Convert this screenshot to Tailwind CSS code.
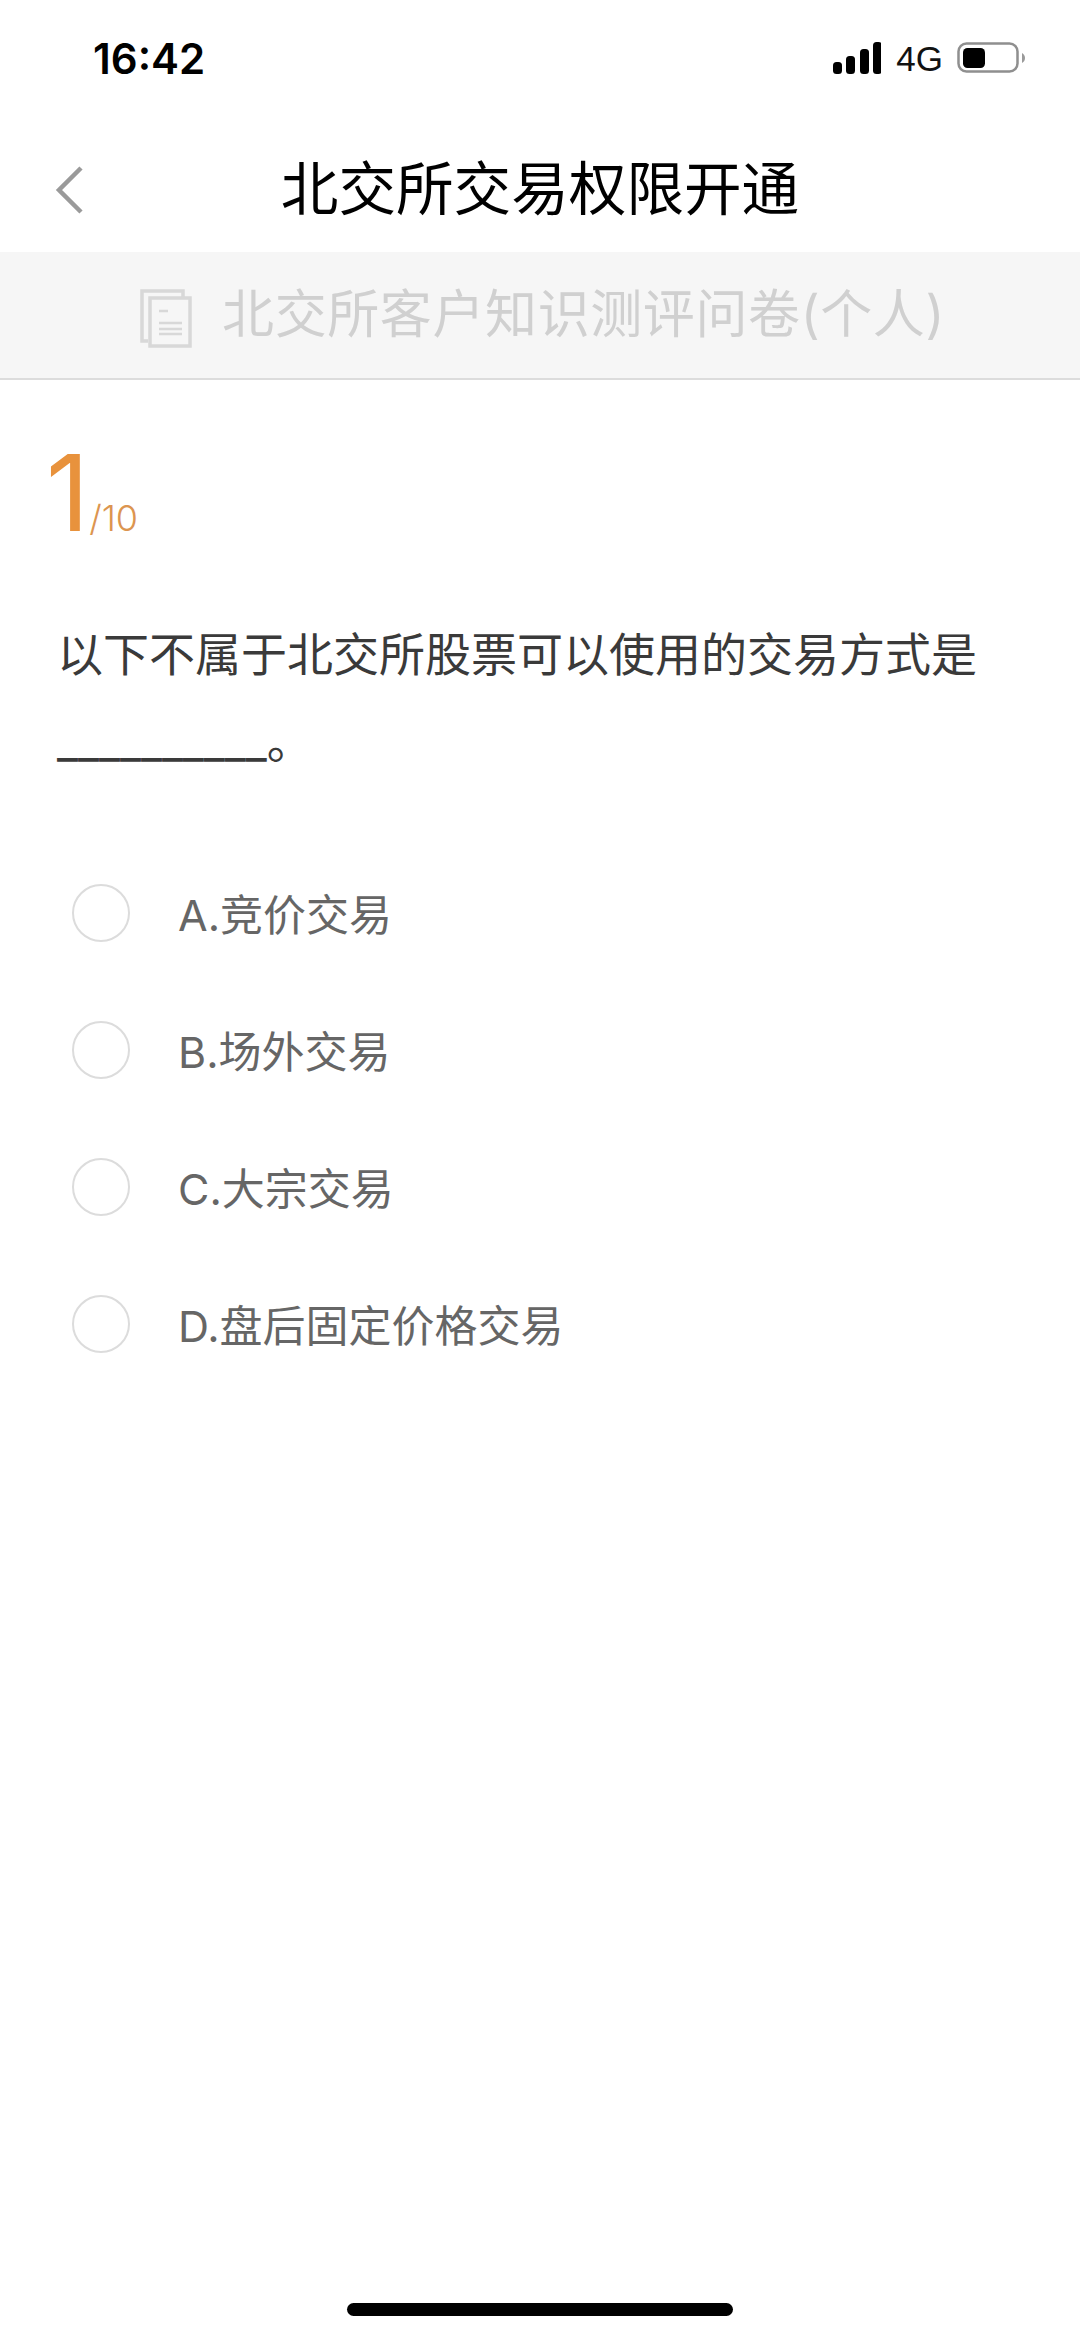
<!DOCTYPE html>
<html lang="zh">
<head>
<meta charset="utf-8">
<script src="https://cdn.jsdelivr.net/npm/@tailwindcss/browser@4"></script>
</head>
<body class="bg-white">
<div class="w-[1080px] h-[2337px] flex flex-col bg-white font-['Inter','Noto_Sans_CJK_SC',sans-serif]">
  <!-- status bar -->
  <div class="h-[116px] shrink-0 flex items-center justify-between pl-[93px] pr-[55px]">
    <span class="text-[42px] leading-none font-semibold text-black mt-[2px]">16:42</span>
    <div class="flex items-center">
      <svg width="48" height="32" viewBox="0 0 48 32" fill="#000"><rect x="0" y="20" width="9" height="12" rx="3.5"/><rect x="13" y="14" width="9" height="18" rx="3.5"/><rect x="27" y="7" width="9" height="25" rx="3.5"/><rect x="40" y="0" width="9" height="32" rx="3.5"/></svg>
      <span class="ml-[15px] text-[35px] leading-none text-[#111] font-['Liberation_Sans']">4G</span>
      <svg class="ml-[14px]" width="68" height="32" viewBox="0 0 68 32"><rect x="1.5" y="1.5" width="59" height="28" rx="8" fill="none" stroke="#8f8f8f" stroke-width="2.5"/><rect x="6" y="6" width="22" height="20" rx="4.5" fill="#000"/><path d="M65 11c2 1 3 3 3 5s-1 4-3 5z" fill="#9a9a9a"/></svg>
    </div>
  </div>
  <!-- nav -->
  <div class="h-[136px] shrink-0 relative flex items-center justify-center pt-[12px]">
    <svg class="absolute left-[54px] top-[49px]" width="32" height="50" viewBox="0 0 32 50" fill="none"><path d="M27 3 5 25l22 22" stroke="#9a9a9a" stroke-width="4.5"/></svg>
    <span class="text-[57.6px] leading-none text-black">北交所交易权限开通</span>
  </div>
  <!-- banner -->
  <div class="h-[128px] shrink-0 bg-[#f6f6f6] border-b-2 border-[#dcdcdc] flex items-center justify-center pl-[5px]">
    <svg class="mt-[6px]" width="52" height="59" viewBox="0 0 52 59" fill="none" stroke="#d8d8d8" stroke-width="3.5"><path d="M8 52H2V2h41v6"/><rect x="10" y="9" width="40" height="48" fill="#f6f6f6"/><path d="M19 22h9M19 34h23M19 40h23M19 45h23" stroke-width="2.5"/></svg>
    <span class="ml-[30px] text-[52px] leading-none text-[#d0d0d0] tracking-[0.6px]">北交所客户知识测评问卷(个人)</span>
  </div>
  <!-- progress -->
  <div class="pl-[46px] pt-[60px] flex items-baseline text-[#e8923c] h-[213px] shrink-0">
    <span class="text-[106px] leading-[106px]">1</span>
    <span class="text-[36px] leading-none font-light text-[#dc9550]">/10</span>
  </div>
  <!-- question -->
  <div class="pl-[57px] pr-[57px] text-[46px] leading-[87px] text-[#3a3a3a] mt-[18px]">以下不属于北交所股票可以使用的交易方式是<br>__________。</div>
  <!-- options -->
  <div class="mt-[59px] flex flex-col pl-[72px]">
    <div class="h-[137px] flex items-center"><span class="w-[58px] h-[58px] rounded-full border-2 border-[#dcdcdc] shrink-0"></span><span class="ml-[48px] mt-[6px] text-[43px] leading-none text-[#666666]">A.竞价交易</span></div>
    <div class="h-[137px] flex items-center"><span class="w-[58px] h-[58px] rounded-full border-2 border-[#dcdcdc] shrink-0"></span><span class="ml-[48px] mt-[6px] text-[43px] leading-none text-[#666666]">B.场外交易</span></div>
    <div class="h-[137px] flex items-center"><span class="w-[58px] h-[58px] rounded-full border-2 border-[#dcdcdc] shrink-0"></span><span class="ml-[48px] mt-[6px] text-[43px] leading-none text-[#666666]">C.大宗交易</span></div>
    <div class="h-[137px] flex items-center"><span class="w-[58px] h-[58px] rounded-full border-2 border-[#dcdcdc] shrink-0"></span><span class="ml-[48px] mt-[6px] text-[43px] leading-none text-[#666666]">D.盘后固定价格交易</span></div>
  </div>
  <div class="mt-auto pb-[21px] flex justify-center"><div class="w-[386px] h-[13px] rounded-full bg-black"></div></div>
</div>
</body>
</html>
